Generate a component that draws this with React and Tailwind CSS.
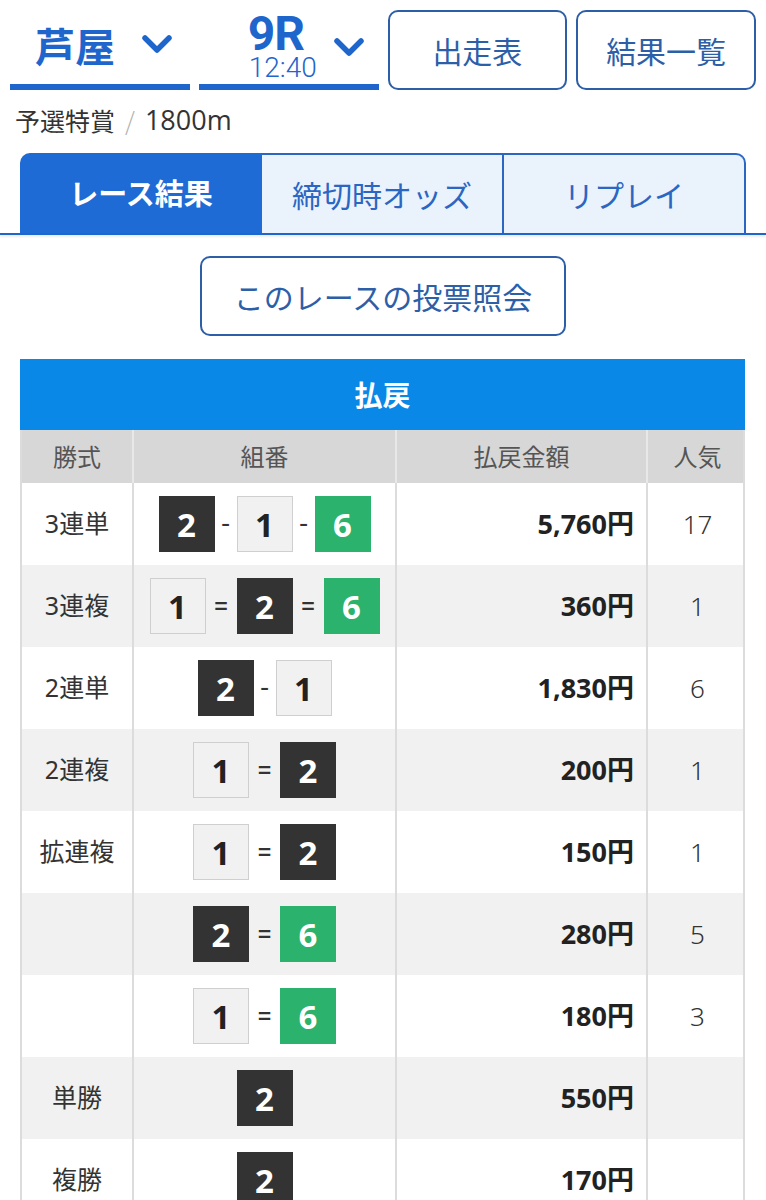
import React from "react";

const JP = { fontFamily: '"Noto Sans", "Noto Sans CJK JP", sans-serif' };
const CJK = { fontFamily: '"Noto Sans CJK JP", sans-serif' };
const NUM = { fontFamily: 'Roboto, "Noto Sans CJK JP", sans-serif' };
const WIDE = { fontFamily: '"Noto Sans", "Noto Sans CJK JP", sans-serif' };

function Chevron() {
  return (
    <svg width="32" height="22" viewBox="0 0 32 22" className="shrink-0">
      <path d="M4 4 L16 16 L28 4" fill="none" stroke="#1f66cc" strokeWidth="5.5" strokeLinecap="round" strokeLinejoin="round" />
    </svg>
  );
}

function Box({ n }) {
  const cls =
    n === 2
      ? "bg-[#333333] text-white"
      : n === 6
      ? "bg-[#2bb26d] text-white"
      : "bg-[#f1f1f1] text-[#222] border border-[#cfcfcf]";
  return (
    <div
      className={`w-[56px] h-[56px] flex items-center justify-center text-[33px] font-bold leading-none ${cls}`}
      style={WIDE}
    >
      {n}
    </div>
  );
}

function Combo({ nums, sep }) {
  const out = [];
  nums.forEach((n, i) => {
    if (i > 0)
      out.push(
        <span
          key={"s" + i}
          className={`text-[#333] text-[28px] leading-none text-center ${sep === "=" ? "w-[31px]" : "w-[22px]"}`}
          style={NUM}
        >
          {sep}
        </span>
      );
    out.push(<Box key={"b" + i} n={n} />);
  });
  return <div className="flex items-center justify-center">{out}</div>;
}

const rows = [
  { label: "3連単", nums: [2, 1, 6], sep: "-", amt: "5,760円", pop: "17" },
  { label: "3連複", nums: [1, 2, 6], sep: "=", amt: "360円", pop: "1" },
  { label: "2連単", nums: [2, 1], sep: "-", amt: "1,830円", pop: "6" },
  { label: "2連複", nums: [1, 2], sep: "=", amt: "200円", pop: "1" },
  { label: "拡連複", nums: [1, 2], sep: "=", amt: "150円", pop: "1" },
  { label: "", nums: [2, 6], sep: "=", amt: "280円", pop: "5" },
  { label: "", nums: [1, 6], sep: "=", amt: "180円", pop: "3" },
  { label: "単勝", nums: [2], sep: "", amt: "550円", pop: "" },
  { label: "複勝", nums: [2], sep: "", amt: "170円", pop: "" },
];

export default function App() {
  return (
    <div className="w-[766px] bg-white text-[#333]" style={JP}>
      {/* header */}
      <div className="grid grid-cols-4 gap-[9px] px-[10px] pt-[10px]">
        <div className="h-[80px] border-b-[6px] border-[#1f66cc] flex items-center pl-[25px] gap-[26px] pb-[4px]">
          <span className="text-[40px] font-bold text-[#1f66cc] leading-none" style={CJK}>芦屋</span>
          <Chevron />
        </div>
        <div className="h-[80px] border-b-[6px] border-[#1f66cc] flex items-start pl-[49px] gap-[16px]">
          <div className="flex flex-col items-start text-[#1f66cc]" style={NUM}>
            <span className="block text-[48px] font-bold leading-[36px] mt-[6px] tracking-[-1px]">9R</span>
            <span className="block text-[28px] font-light leading-[26px] mt-[3px] pl-[1px]">12:40</span>
          </div>
          <div className="mt-[27px]">
            <Chevron />
          </div>
        </div>
        <button className="h-[80px] rounded-[10px] border-2 border-[#2d5fa8] text-[#2d5fa8] text-[30px] flex items-center justify-center" style={CJK}>
          出走表
        </button>
        <button className="h-[80px] rounded-[10px] border-2 border-[#2d5fa8] text-[#2d5fa8] text-[30px] flex items-center justify-center" style={CJK}>
          結果一覧
        </button>
      </div>

      {/* race info */}
      <div className="px-[15px] pt-[12px] text-[25px] leading-[36px] text-[#333] flex items-center" style={CJK}>
        <span>予選特賞</span>
        <span className="text-[#b0b0b0] font-light mx-[10px]">/</span>
        <span className="text-[27px]" style={{ fontFamily: '"Open Sans", sans-serif' }}>1800m</span>
      </div>

      {/* tabs */}
      <div className="mt-[15px] border-b-2 border-[#1f66cc] shadow-[0_2px_2px_rgba(0,0,0,0.08)]" style={CJK}>
        <div className="mx-[20px] grid grid-cols-3 h-[80px]">
          <div className="bg-[#1e6bd6] rounded-tl-[10px] flex items-center justify-center text-white text-[29px] font-bold">
            レース結果
          </div>
          <div className="bg-[#eaf2fc] border-t-2 border-r-2 border-[#2a66c2] flex items-center justify-center text-[#2a66c2] text-[30px]">
            締切時オッズ
          </div>
          <div className="bg-[#eaf2fc] border-t-2 border-r-2 border-[#2a66c2] rounded-tr-[10px] flex items-center justify-center text-[#2a66c2] text-[30px]">
            リプレイ
          </div>
        </div>
      </div>

      {/* inquiry button */}
      <div className="flex justify-center mt-[21px]">
        <button className="w-[366px] h-[80px] rounded-[10px] border-2 border-[#2d5fa8] text-[#2d5fa8] text-[30px] flex items-center justify-center" style={CJK}>
          このレースの投票照会
        </button>
      </div>

      {/* table */}
      <div className="mx-[20px] mt-[23px] w-[725px]">
        <div className="h-[71px] bg-[#0a88e8] flex items-center justify-center text-white text-[28px] font-bold">
          払戻
        </div>
        <div className="grid grid-cols-[112px_263px_251px_99px] h-[53px] bg-[#d7d7d7] text-[#555] text-[24px] border-x-2 border-[#dcdcdc]">
          <div className="flex items-center justify-center border-r-2 border-[#e8e8e8]">勝式</div>
          <div className="flex items-center justify-center border-r-2 border-[#e8e8e8]">組番</div>
          <div className="flex items-center justify-center border-r-2 border-[#e8e8e8]">払戻金額</div>
          <div className="flex items-center justify-center">人気</div>
        </div>
        {rows.map((r, i) => (
          <div
            key={i}
            className={`grid grid-cols-[112px_263px_251px_99px] h-[82px] border-x-2 border-[#dcdcdc] ${
              i % 2 === 1 ? "bg-[#f1f1f1]" : "bg-white"
            }`}
          >
            <div className="flex items-center justify-center border-r-2 border-[#dcdcdc] text-[25px] text-[#333]">
              {r.label}
            </div>
            <div className="flex items-center justify-center border-r-2 border-[#dcdcdc]">
              <Combo nums={r.nums} sep={r.sep} />
            </div>
            <div className="flex items-center justify-end pr-[12px] border-r-2 border-[#dcdcdc] text-[27px] font-bold text-[#222]">
              {r.amt}
            </div>
            <div className="flex items-center justify-center text-[26px] font-light text-[#333]">
              {r.pop}
            </div>
          </div>
        ))}
      </div>
    </div>
  );
}
